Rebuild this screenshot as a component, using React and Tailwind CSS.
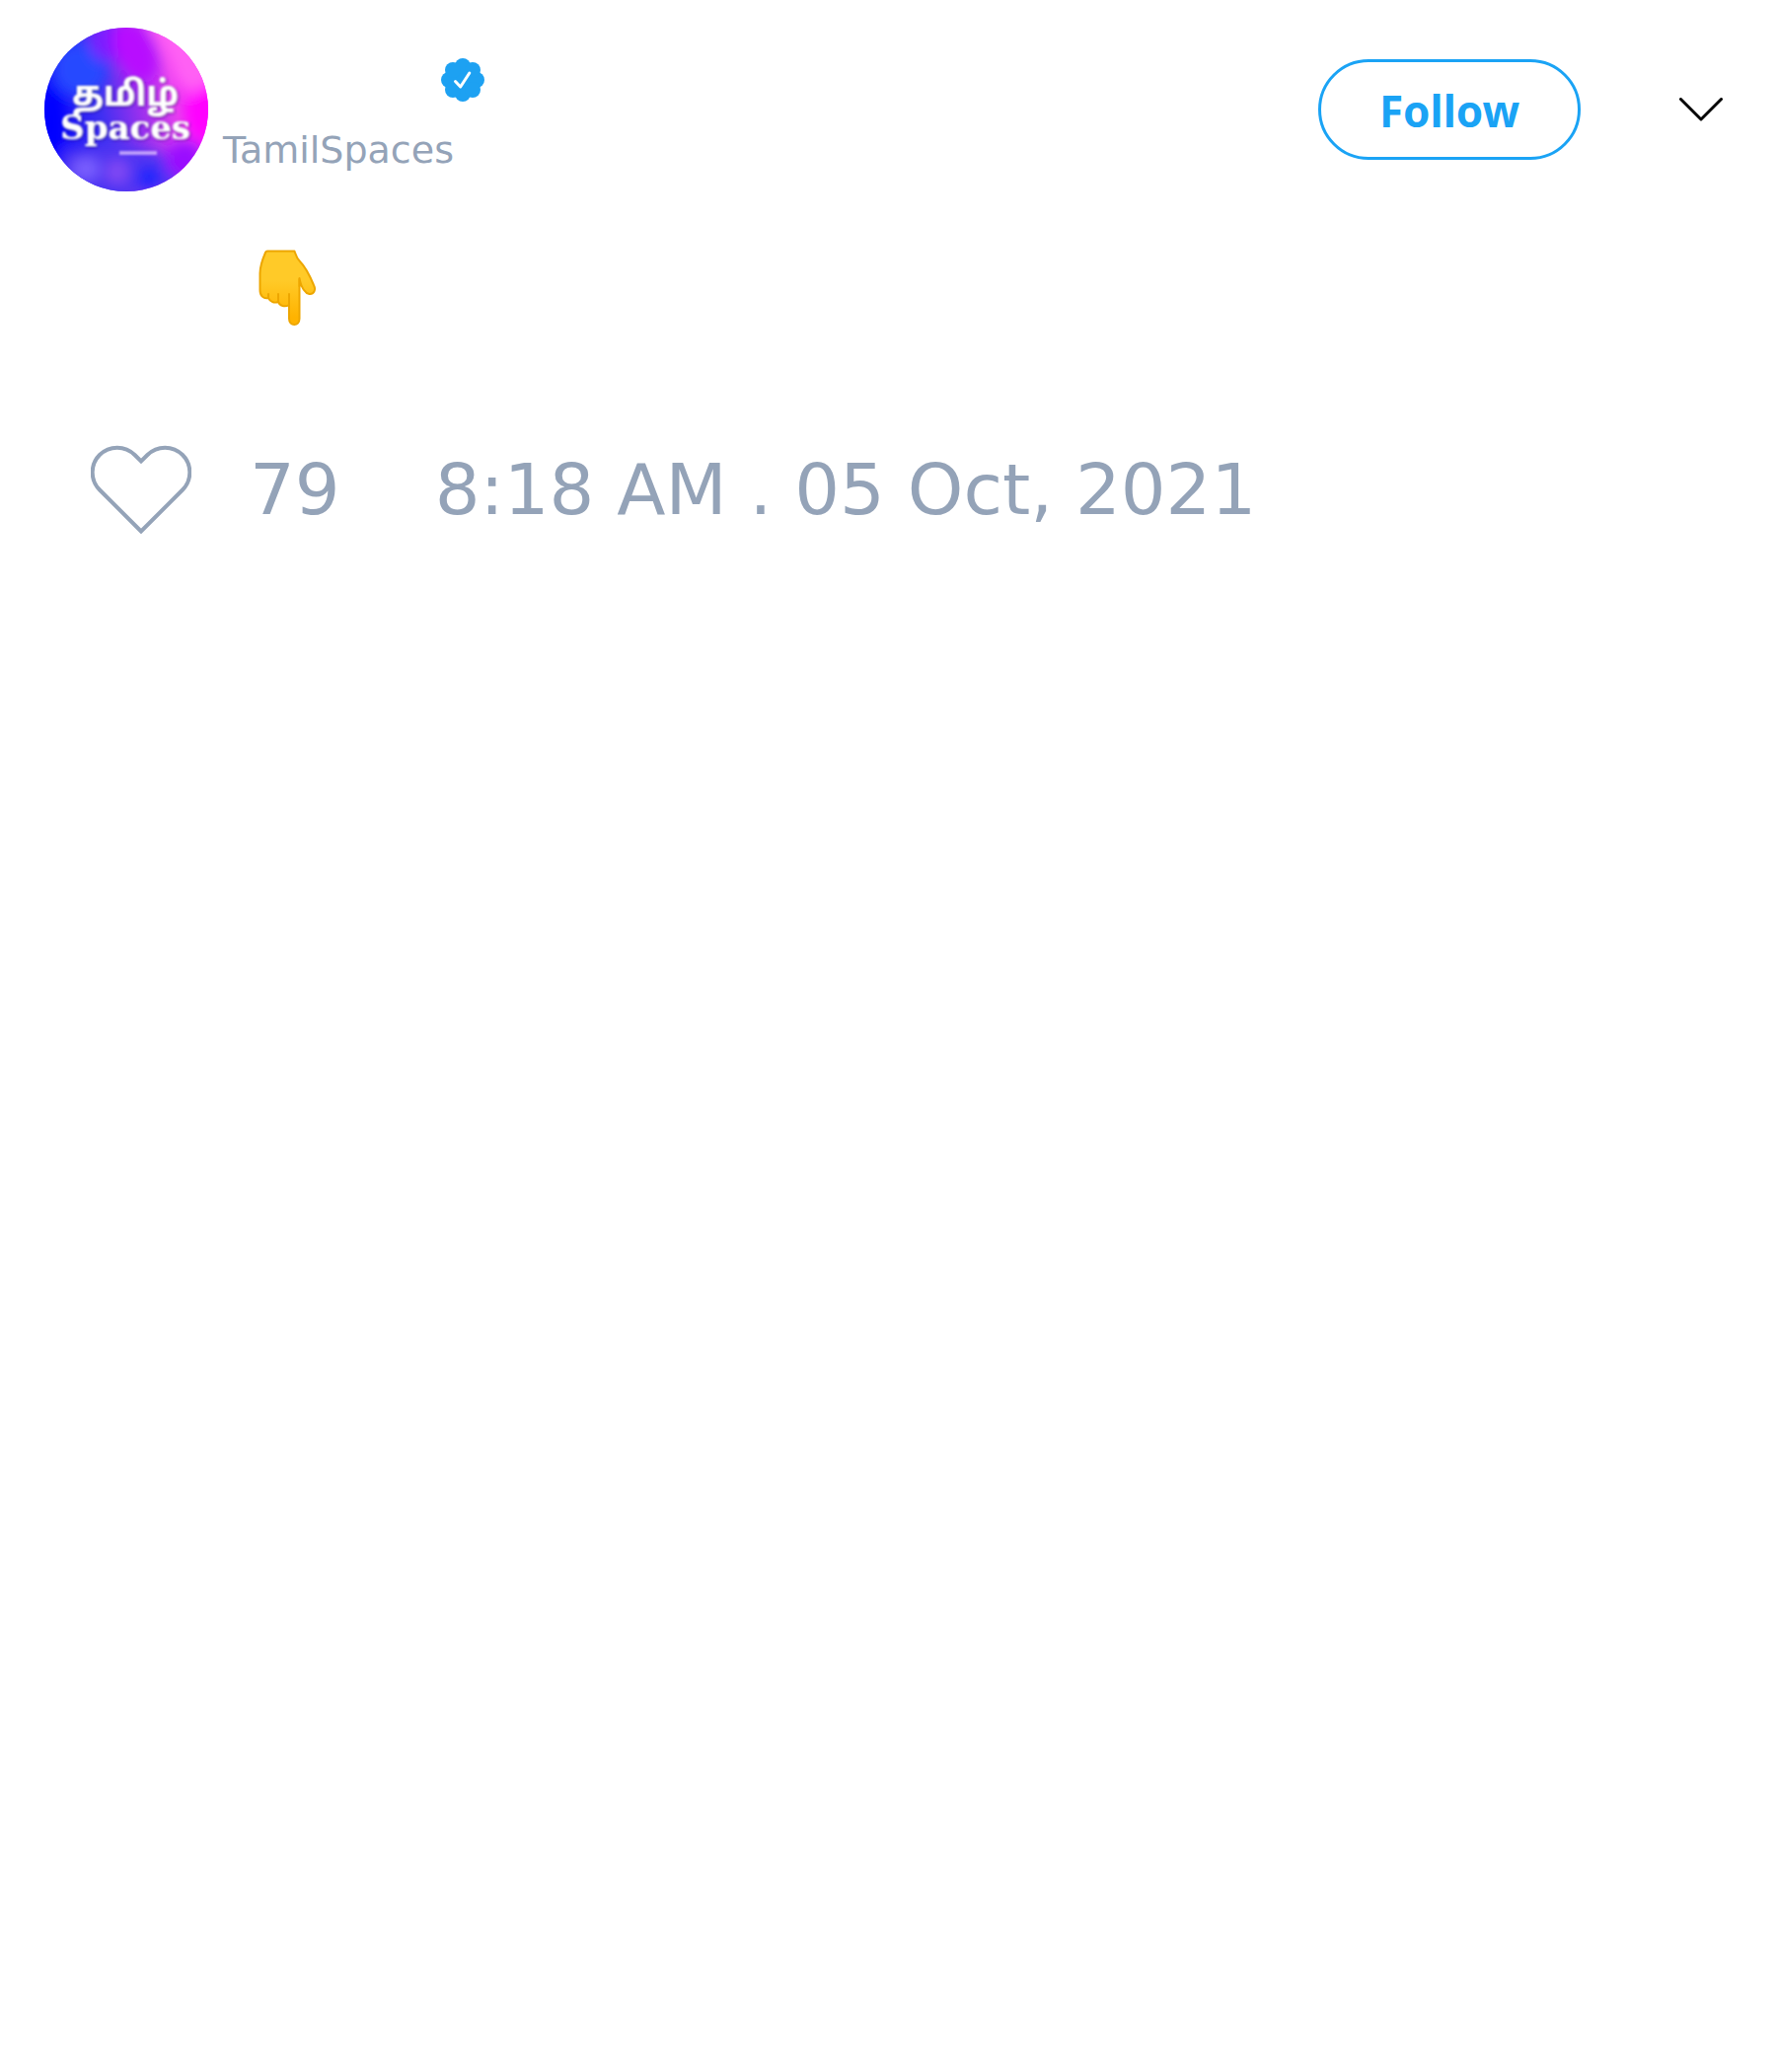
function Avatar() {
  return (
    <svg viewBox="0 0 166 166" className="size-[166px] shrink-0 rounded-full" role="img" aria-label="Tamil Spaces">
      <defs>
        <linearGradient id="base" x1="0" y1="0.6" x2="1" y2="0.4">
          <stop offset="0" stopColor="#0808ff" />
          <stop offset="0.35" stopColor="#4030f2" />
          <stop offset="0.58" stopColor="#9a30ee" />
          <stop offset="0.8" stopColor="#e840f0" />
          <stop offset="1" stopColor="#ff08ff" />
        </linearGradient>
        <filter id="haze" x="-50%" y="-50%" width="200%" height="200%">
          <feGaussianBlur stdDeviation="7" />
        </filter>
        <filter id="soft" x="-10%" y="-10%" width="120%" height="120%">
          <feGaussianBlur stdDeviation="1.1" result="t" />
          <feDropShadow in="t" dx="1" dy="1" stdDeviation="1.8" floodColor="#26107c" floodOpacity="0.8" />
        </filter>
        <filter id="caption" x="-20%" y="-200%" width="140%" height="500%">
          <feGaussianBlur stdDeviation="1.2" />
        </filter>
      </defs>
      <rect width="166" height="166" fill="url(#base)" />
      <g filter="url(#haze)">
        <ellipse cx="36" cy="42" rx="28" ry="28" fill="#2748ff" />
        <ellipse cx="62" cy="14" rx="16" ry="20" fill="#7a1cff" />
        <ellipse cx="92" cy="24" rx="20" ry="34" fill="#b80cff" transform="rotate(-25 92 24)" />
        <path d="M102 -10C114 10 126 30 132 52L150 72L176 50L150 -10Z" fill="#ff60f4" />
        <ellipse cx="160" cy="86" rx="16" ry="26" fill="#ff00ff" />
        <ellipse cx="8" cy="96" rx="14" ry="40" fill="#0400ff" />
        <path d="M20 124L70 118L120 128L150 166L10 170Z" fill="#5034f2" />
        <ellipse cx="142" cy="134" rx="20" ry="20" fill="#9a08ff" />
        <ellipse cx="42" cy="143" rx="14" ry="11" fill="#7c60ff" />
        <ellipse cx="74" cy="146" rx="11" ry="12" fill="#8448f4" />
        <ellipse cx="106" cy="152" rx="11" ry="11" fill="#1024ff" />
      </g>
      <g filter="url(#soft)" fill="#fff" textAnchor="middle">
        <text x="82" y="79" fontSize="35" fontWeight="700" fontFamily="'Noto Sans Tamil', 'Noto Sans', sans-serif">தமிழ்</text>
        <text x="82" y="113" fontSize="34" fontWeight="700" fontFamily="'DejaVu Serif', serif">Spaces</text>
      </g>
      <rect x="76" y="125" width="38" height="4" fill="#e8ccff" opacity="0.7" filter="url(#caption)" />
    </svg>
  );
}

function VerifiedBadge() {
  return (
    <svg viewBox="0 0 44 44" className="ml-[221px] size-11" role="img" aria-label="Verified account">
      <g fill="#1da1f2">
        <circle cx="22" cy="22" r="17" />
        <circle cx="22" cy="8" r="8" />
        <circle cx="22" cy="36" r="8" />
        <circle cx="8" cy="22" r="8" />
        <circle cx="36" cy="22" r="8" />
        <circle cx="12" cy="12" r="8" />
        <circle cx="32" cy="12" r="8" />
        <circle cx="12" cy="32" r="8" />
        <circle cx="32" cy="32" r="8" />
      </g>
      <path d="M14.5 23.5l5.200 5.500L28.800 15" fill="none" stroke="#fff" strokeWidth="3" strokeLinecap="round" strokeLinejoin="round" />
    </svg>
  );
}

function PointingDown() {
  return (
    <svg viewBox="0 0 60 78" className="h-[78px] w-[60px]" role="img" aria-label="👇">
      <defs>
        <linearGradient id="skin" x1="0" y1="0" x2="0" y2="1">
          <stop offset="0.4" stopColor="#ffca28" />
          <stop offset="0.9" stopColor="#ffb300" />
        </linearGradient>
      </defs>
      <path
        d="M9 1.500H36.500C38 6 38.500 8.500 42 12C48 18 51 24 56 36C58.500 41 56 45.500 51.500 45C46 44 43 36 41.500 30V70C41.500 78 31 78 31 70V56C27 58.500 22 57.500 20 53C16 54.500 12 53 10 49C5 50 1.500 47 1.500 41V24C1.500 16 4 10 7 3Q7.500 1.500 9 1.500Z"
        fill="url(#skin)"
        stroke="#eda600"
        strokeWidth="2"
        strokeLinejoin="round"
      />
      <path d="M10 45v4M20 45v8M31 45v12M41.500 29v8" fill="none" stroke="#eda600" strokeWidth="2" strokeLinecap="round" />
    </svg>
  );
}

export default function App() {
  return (
    <article className="bg-white pt-7 font-['DejaVu_Sans',sans-serif] text-[#94a3b8]">
      <header className="flex items-center pr-[54px] pl-[45px]">
        <Avatar />
        <div className="flex flex-col gap-6 pt-[14px] pl-[15px]">
          <VerifiedBadge />
          <a href="#profile" className="text-[38px] leading-[50px]">TamilSpaces</a>
        </div>
        <button
          type="button"
          className="ml-auto h-[102px] w-[266px] rounded-full border-3 border-[#1aa3f5] pt-[2px] font-['Noto_Sans',sans-serif] text-[44px] font-bold text-[#1aa3f5]"
        >
          Follow
        </button>
        <button type="button" aria-label="More options" className="ml-[100px]">
          <svg viewBox="0 0 44 24" className="h-6 w-11" fill="none" stroke="#000" strokeWidth="3" strokeLinecap="round" strokeLinejoin="round">
            <path d="M1.500 1.500L22 22L42.500 1.500" />
          </svg>
        </button>
      </header>
      <p className="mt-[59px] pl-[262px]">
        <PointingDown />
      </p>
      <footer className="mt-[120px] flex items-center pl-[92px] text-[72px] leading-[84px]">
        <button type="button" aria-label="Like">
          <svg viewBox="0 0 102 90" className="h-[90px] w-[102px]" fill="none" stroke="#94a3b8" strokeWidth="4">
            <path d="M51 87.500L9 45.500A25 25 0 0 1 44.500 10L51 16.500L57.500 10A25 25 0 0 1 93 45.500Z" />
          </svg>
        </button>
        <span className="ml-[59px]">79</span>
        <time dateTime="2021-10-05T08:18" className="ml-24">8:18 AM . 05 Oct, 2021</time>
      </footer>
    </article>
  );
}
